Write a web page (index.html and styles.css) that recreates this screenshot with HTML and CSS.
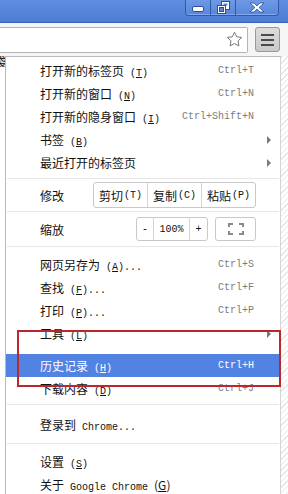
FILE: index.html
```html
<!DOCTYPE html>
<html lang="zh-CN">
<head>
  <meta charset="UTF-8" />
  <meta name="viewport" content="width=device-width, initial-scale=1.0" />
  <title>Chrome 菜单</title>
  <link rel="stylesheet" href="styles.css">
</head>
<body>
  <div class="titlebar">
    <div class="winbtns">
      <div class="wb wb-min">
        <svg width="12" height="6" viewBox="0 0 12 6"><rect x="0.5" y="0.5" width="11" height="5" rx="1.5" fill="#fff" stroke="#2f4f8f"/></svg>
      </div>
      <div class="wb wb-max">
        <svg width="13" height="13" viewBox="0 0 13 13">
          <rect x="4.5" y="0.5" width="8" height="8" fill="#fff" stroke="#2f4f8f"/>
          <rect x="6.5" y="2.5" width="4" height="2" fill="#5a86d8"/>
          <rect x="0.5" y="4.5" width="8" height="8" fill="#fff" stroke="#2f4f8f"/>
          <rect x="2.5" y="6.5" width="4" height="4" fill="#5a86d8" stroke="#2f4f8f"/>
        </svg>
      </div>
      <div class="wb wb-close">
        <svg width="16" height="11" viewBox="0 0 16 11"><path d="M1 1h4l3 3 3-3h4l-5 4.5 5 4.5h-4l-3-3-3 3H1l5-4.5z" fill="#fff" stroke="#2f4f8f" stroke-width="0.8"/></svg>
      </div>
    </div>
  </div>

  <div class="toolbar">
    <div class="omnibox">
      <svg class="star" width="17" height="17" viewBox="0 0 17 17"><path d="M8.5 1.2l2.2 4.6 5 .6-3.7 3.5.9 5-4.4-2.4-4.4 2.4.9-5L1.3 6.4l5-.6z" fill="#fff" stroke="#777" stroke-width="1"/></svg>
    </div>
    <div class="menubtn"><span></span><span></span><span></span></div>
  </div>

  <div class="main">
    <div class="page-left"><div class="tab-stub">袋</div></div>
    <div class="menu">
      <div class="group first">
        <div class="item"><span class="label">打开新的标签页<span class="k"> (<u>T</u>)</span></span><span class="key">Ctrl+T</span></div>
        <div class="item"><span class="label">打开新的窗口<span class="k"> (<u>N</u>)</span></span><span class="key">Ctrl+N</span></div>
        <div class="item"><span class="label">打开新的隐身窗口<span class="k"> (<u>I</u>)</span></span><span class="key">Ctrl+Shift+N</span></div>
        <div class="item sub"><span class="label">书签<span class="k"> (<u>B</u>)</span></span><span class="arrow"></span></div>
        <div class="item sub"><span class="label">最近打开的标签页</span><span class="arrow"></span></div>
      </div>
      <div class="sep"></div>
      <div class="row edit">
        <span class="label">修改</span>
        <div class="btngroup">
          <div class="btn">剪切<span class="k">(T)</span></div>
          <div class="btn">复制<span class="k">(C)</span></div>
          <div class="btn">粘贴<span class="k">(P)</span></div>
        </div>
      </div>
      <div class="sep"></div>
      <div class="row zoom">
        <span class="label">缩放</span>
        <div class="btngroup zoomgroup">
          <div class="btn z-minus">-</div>
          <div class="btn z-val">100%</div>
          <div class="btn z-plus">+</div>
        </div>
        <div class="btngroup fullgroup">
          <div class="btn z-full">
            <svg width="16" height="12" viewBox="0 0 16 12"><path d="M1 4V1h4M11 1h4v3M15 8v3h-4M5 11H1V8" fill="none" stroke="#8a8a8a" stroke-width="2"/></svg>
          </div>
        </div>
      </div>
      <div class="sep"></div>
      <div class="group mid">
        <div class="item"><span class="label">网页另存为<span class="k"> (<u>A</u>)...</span></span><span class="key">Ctrl+S</span></div>
        <div class="item"><span class="label">查找<span class="k"> (<u>F</u>)...</span></span><span class="key">Ctrl+F</span></div>
        <div class="item"><span class="label">打印<span class="k"> (<u>P</u>)...</span></span><span class="key">Ctrl+P</span></div>
        <div class="item sub"><span class="label">工具<span class="k"> (<u>L</u>)</span></span><span class="arrow"></span></div>
        <div class="item active"><span class="label">历史记录<span class="k"> (<u>H</u>)</span></span><span class="key">Ctrl+H</span></div>
        <div class="item"><span class="label">下载内容<span class="k"> (<u>D</u>)</span></span><span class="key">Ctrl+J</span></div>
      </div>
      <div class="sep"></div>
      <div class="group signin">
        <div class="item"><span class="label">登录到<span class="k"> Chrome...</span></span></div>
      </div>
      <div class="sep"></div>
      <div class="group last">
        <div class="item"><span class="label">设置<span class="k"> (<u>S</u>)</span></span></div>
        <div class="item"><span class="label">关于<span class="k"> Google Chrome </span>(<u>G</u>)</span></div>
      </div>
      <div class="callout"></div>
    </div>
    <div class="page-right"></div>
  </div>
</body>
</html>
```

FILE: styles.css
```css
body {
  margin: 0;
  width: 288px;
  height: 494px;
  overflow: hidden;
  font-family: "Noto Sans CJK SC", sans-serif;
  font-size: 12px;
  color: #111;
  background: repeating-linear-gradient(135deg, #fff 0 3px, #e6e6e6 3px 4px);
}
.titlebar {
  height: 22px;
  background: linear-gradient(#5f8ee0, #4c7bd3);
  border-bottom: 1px solid #3a63b3;
  display: flex;
  justify-content: flex-end;
  padding-right: 9px;
}
.winbtns {
  display: flex;
  height: 15px;
  border: 1px solid #2e5aa8;
  border-top: none;
  border-radius: 0 0 4px 4px;
  background: linear-gradient(#6d99e6, #5886d9);
  box-shadow: inset 0 -1px 0 #86aaf0;
}
.wb {
  display: flex;
  align-items: center;
  justify-content: center;
  border-left: 1px solid #2e5aa8;
}
.wb:first-child {
  border-left: none;
}
.wb-min {
  width: 24px;
  align-items: flex-end;
  padding-bottom: 3px;
  box-sizing: border-box;
}
.wb-max {
  width: 24px;
}
.wb-close {
  width: 42px;
}
.toolbar {
  height: 33px;
  display: flex;
  align-items: center;
  background: #f4f5f7;
  padding-right: 8px;
}
.omnibox {
  flex: 1;
  height: 24px;
  background: #fff;
  border: 1px solid #b4b4b4;
  border-left: none;
  border-radius: 0 2px 2px 0;
  display: flex;
  align-items: center;
  justify-content: flex-end;
  padding-right: 4px;
}
.menubtn {
  width: 23px;
  height: 23px;
  margin-left: 7px;
  background: linear-gradient(#dcdcdc, #c9c9c9);
  border: 1px solid #989898;
  border-radius: 3px;
  display: flex;
  flex-direction: column;
  align-items: center;
  justify-content: center;
  gap: 3px;
}
.menubtn span {
  width: 13px;
  height: 2px;
  background: #4a4a4a;
}
.main {
  display: flex;
  height: 438px;
}
.page-left {
  width: 5px;
  background: #fff;
  overflow: hidden;
}
.tab-stub {
  height: 11px;
  background: #dedede;
  font-size: 12px;
  line-height: 11px;
  text-indent: -6px;
  overflow: hidden;
}
.menu {
  position: relative;
  width: 274px;
  background: #fff;
  border-left: 1px solid #b9b9b9;
  border-right: 1px solid #d4d4d4;
  border-top: 1px solid #b9b9b9;
}
.group.first {
  padding-top: 2px;
}
.group.mid {
  padding-top: 6px;
}
.group.signin {
  padding-top: 8px;
  padding-bottom: 3px;
}
.group.last {
  padding-top: 6px;
}
.item {
  height: 23px;
  display: flex;
  align-items: center;
  padding-left: 34px;
  padding-right: 26px;
}
.item.sub {
  padding-right: 9px;
}
.item.active {
  margin-top: 9px;
  background: #5283e3;
  color: #fff;
}
.item.active .key {
  color: #fff;
}
.label {
  white-space: nowrap;
}
.k {
  font-family: "Liberation Mono", monospace;
  font-size: 10px;
}
.key {
  margin-left: auto;
  font-family: "Liberation Mono", monospace;
  font-size: 10px;
  color: #7c7c7c;
}
.arrow {
  margin-left: auto;
  width: 0;
  height: 0;
  border-top: 4px solid transparent;
  border-bottom: 4px solid transparent;
  border-left: 4px solid #7a7a7a;
}
.sep {
  height: 1px;
  background: #e6e6e6;
  margin: 4px 1px 0;
}
.row + .sep {
  margin-top: 0;
}
.row {
  display: flex;
  align-items: center;
  padding-left: 34px;
}
.row.edit {
  height: 32px;
}
.row.zoom {
  height: 34px;
}
.row .label {
  width: 53px;
}
.row.zoom .label {
  width: 96px;
}
.btngroup {
  display: flex;
  border: 1px solid #c9c9c9;
  border-radius: 3px;
  background: #fff;
}
.edit .btngroup {
  height: 24px;
}
.btn {
  display: flex;
  align-items: center;
  justify-content: center;
  border-left: 1px solid #d4d4d4;
  white-space: nowrap;
}
.btn:first-child {
  border-left: none;
}
.edit .btn {
  width: 53px;
}
.edit .btn .k {
  margin-left: 1px;
}
.zoomgroup,
.fullgroup {
  height: 22px;
}
.zoomgroup .btn {
  font-family: "Liberation Mono", monospace;
  font-size: 10px;
}
.z-minus {
  width: 16px;
}
.z-val {
  width: 35px;
}
.z-plus {
  width: 17px;
}
.fullgroup {
  margin-left: 7px;
}
.z-full {
  width: 39px;
}
.callout {
  position: absolute;
  left: 11px;
  top: 273px;
  width: 260px;
  height: 53px;
  border: 2px solid #b8282c;
  pointer-events: none;
}
.page-right {
  flex: 1;
}
```
